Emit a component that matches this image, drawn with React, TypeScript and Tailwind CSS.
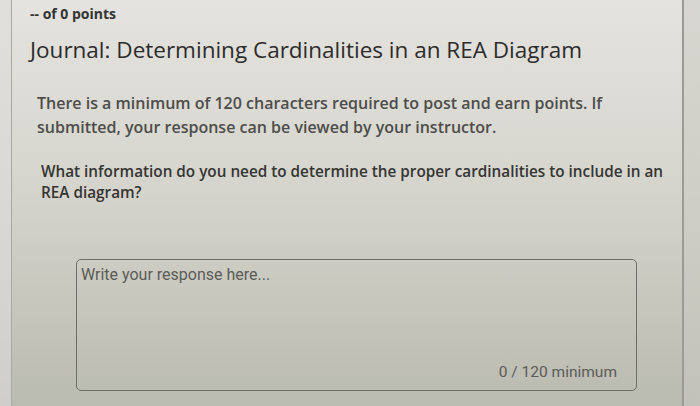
export default function App() {
	return (
		<div className="flex h-[406px] w-[700px] overflow-hidden bg-linear-to-b from-[#e4e3df] via-[#d4d3cb] to-[#b9bab0] font-['Open_Sans',sans-serif]">
			<div className="w-[12px] shrink-0 border-r border-[#a9a9a3] bg-[#dedcd8]/60" />
			<div className="flex w-[672px] shrink-0 flex-col border-r-2 border-[#9a9b92]">
				<div className="pl-[18px] pt-[4px] text-[14px] font-bold leading-[20px] text-[#333]">
					-- of 0 points
				</div>
				<h1 className="mt-[11px] pl-[18px] text-[22.5px] font-normal leading-[30px] text-[#2c2c2c]">
					Journal: Determining Cardinalities in an REA Diagram
				</h1>
				<p className="mt-[26px] pl-[25px] pr-[40px] text-[16px] font-semibold leading-[24px] text-[#4d4d4b]">
					There is a minimum of 120 characters required to post and earn
					points. If submitted, your response can be viewed by your
					instructor.
				</p>
				<p className="mt-[22px] pl-[29px] pr-[4px] text-[15.3px] font-semibold leading-[21px] text-[#353533]">
					What information do you need to determine the proper cardinalities to
					include in an REA diagram?
				</p>
				<div className="ml-[64px] mt-[56px] flex h-[132px] w-[561px] flex-col justify-between rounded-[5px] border-[1.5px] border-[#6e6e68] px-[4px] pb-[6px] pt-[3px] font-['Roboto',sans-serif] text-[16px] text-[#5c5c57]">
					<div>Write your response here...</div>
					<div className="pr-[15px] text-right text-[15.5px]">0 / 120 minimum</div>
				</div>
			</div>
			<div className="flex-1 bg-[#c9cac1]/50" />
		</div>
	);
}
